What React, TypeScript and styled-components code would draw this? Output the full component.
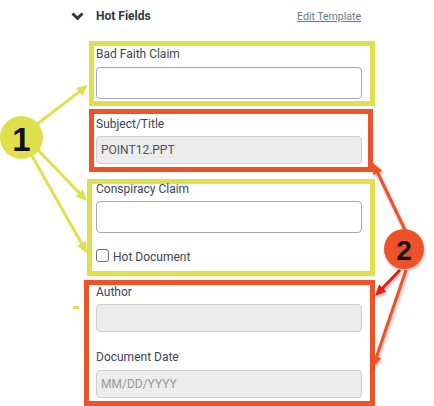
import React from "react";
import styled, { createGlobalStyle } from "styled-components";

const YELLOW = "#dfe04b";
const ORANGE = "#f05228";
const RED = "#f21b12";

const Global = createGlobalStyle`
  html, body { margin: 0; padding: 0; background: #fff; }
  * { box-sizing: border-box; }
`;

const Page = styled.div`
  position: relative;
  width: 434px;
  height: 406px;
  overflow: hidden;
  background: #fff;
  font-family: Roboto, "Liberation Sans", sans-serif;
`;

const Header = styled.div`
  display: flex;
  align-items: baseline;
  margin-left: 71px;
  width: 290px;
  padding-top: 8px;
  height: 24px;
`;

const ChevronIcon = styled.svg`
  width: 13px;
  height: 8px;
  align-self: center;
  flex: none;
`;

const Title = styled.h3`
  margin: 0 0 0 12px;
  font-size: 12px;
  line-height: 16px;
  font-weight: 700;
  color: #2e3847;
`;

const EditLink = styled.a`
  margin-left: auto;
  font-size: 10.5px;
  line-height: 16px;
  color: #6a7890;
  text-decoration: underline;
  cursor: pointer;
`;

const Box = styled.section<{
  $color: string;
  $ml: number;
  $w: number;
  $mt: number;
  $pad: string;
}>`
  display: flex;
  flex-direction: column;
  border: 5px solid ${(p) => p.$color};
  margin-left: ${(p) => p.$ml}px;
  margin-top: ${(p) => p.$mt}px;
  width: ${(p) => p.$w}px;
  padding: ${(p) => p.$pad};
`;

const Field = styled.div<{ $mt?: number; $gap: number }>`
  display: flex;
  flex-direction: column;
  gap: ${(p) => p.$gap}px;
  margin-top: ${(p) => p.$mt ?? 0}px;
`;

const Label = styled.label`
  font-size: 12px;
  line-height: 16px;
  color: #3b4658;
`;

const TextInput = styled.input<{ $h: number; $disabled?: boolean }>`
  display: block;
  width: 100%;
  height: ${(p) => p.$h}px;
  margin: 0;
  padding: 0 4px;
  border: 1px solid ${(p) => (p.$disabled ? "#cfcfcf" : "#a9a9a9")};
  border-radius: 4px;
  background: ${(p) => (p.$disabled ? "#ececec" : "#fff")};
  font-family: Roboto, "Liberation Sans", sans-serif;
  font-size: 12px;
  color: #50555d;
  outline: none;
  &::placeholder {
    color: #9a9a9a;
  }
`;

const CheckRow = styled.label`
  display: flex;
  align-items: flex-start;
  gap: 4px;
  margin-top: 16px;
  height: 16px;
  font-size: 12px;
  line-height: 16px;
  color: #3b4658;
`;

const Check = styled.input`
  appearance: none;
  -webkit-appearance: none;
  width: 13px;
  height: 13px;
  margin: 0;
  border: 1.5px solid #6f6f6f;
  border-radius: 3px;
  background: #fff;
  flex: none;
`;

const Overlay = styled.svg`
  position: absolute;
  left: 0;
  top: 0;
  width: 434px;
  height: 406px;
  pointer-events: none;
  overflow: visible;
`;

const Badge = styled.div<{ $bg: string; $x: number; $y: number; $d: number; $fs: number; $shadow?: boolean }>`
  position: absolute;
  left: ${(p) => p.$x}px;
  top: ${(p) => p.$y}px;
  width: ${(p) => p.$d}px;
  height: ${(p) => p.$d}px;
  border-radius: 50%;
  background: ${(p) => p.$bg};
  display: flex;
  align-items: center;
  justify-content: center;
  font-family: "Liberation Sans", Arial, sans-serif;
  font-weight: 700;
  font-size: ${(p) => p.$fs}px;
  line-height: 1;
  color: #111;
  padding-top: 3px;
  ${(p) => (p.$shadow ? "box-shadow: 1px 2px 3px rgba(0,0,0,0.25);" : "")}
`;

type ArrowProps = { x1: number; y1: number; x2: number; y2: number; color: string; len?: number; w?: number; sw?: number };

function Arrow({ x1, y1, x2, y2, color, len = 11, w = 10, sw = 3 }: ArrowProps) {
  const dx = x2 - x1;
  const dy = y2 - y1;
  const L = Math.hypot(dx, dy);
  const ux = dx / L;
  const uy = dy / L;
  const bx = x2 - ux * len;
  const by = y2 - uy * len;
  const px = -uy * (w / 2);
  const py = ux * (w / 2);
  return (
    <g>
      <line x1={x1} y1={y1} x2={bx + ux} y2={by + uy} stroke={color} strokeWidth={sw} />
      <polygon points={`${x2},${y2} ${bx + px},${by + py} ${bx - px},${by - py}`} fill={color} />
    </g>
  );
}

export default function App() {
  return (
    <Page>
      <Global />
      <Header>
        <ChevronIcon viewBox="0 0 13 8">
          <polyline points="1.5,1.5 6.5,6.3 11.5,1.5" fill="none" stroke="#2e3847" strokeWidth={3} />
        </ChevronIcon>
        <Title>Hot Fields</Title>
        <EditLink>Edit Template</EditLink>
      </Header>

      <Box $color={YELLOW} $ml={89} $w={286} $mt={17} $pad="0 8px 2px 2px">
        <Field $gap={5}>
          <Label>Bad Faith Claim</Label>
          <TextInput $h={32} />
        </Field>
      </Box>

      <Box $color={ORANGE} $ml={89} $w={284} $mt={3} $pad="2px 6px 3px 2px">
        <Field $gap={4}>
          <Label>Subject/Title</Label>
          <TextInput $h={28} $disabled readOnly defaultValue="POINT12.PPT" />
        </Field>
      </Box>

      <Box $color={YELLOW} $ml={87} $w={288} $mt={7} $pad="0 8px 6px 4px">
        <Field $gap={4} $mt={-3}>
          <Label>Conspiracy Claim</Label>
          <TextInput $h={32} />
        </Field>
        <CheckRow>
          <Check type="checkbox" />
          Hot Document
        </CheckRow>
      </Box>

      <Box $color={ORANGE} $ml={84} $w={291} $mt={4} $pad="0 8px 3px 7px">
        <Field $gap={4} $mt={-1}>
          <Label>Author</Label>
          <TextInput $h={28} $disabled readOnly />
        </Field>
        <Field $gap={5} $mt={17}>
          <Label>Document Date</Label>
          <TextInput $h={28} $disabled readOnly placeholder="MM/DD/YYYY" />
        </Field>
      </Box>

      <Overlay viewBox="0 0 434 406">
        <rect x={73} y={306} width={6} height={3} fill={YELLOW} />
        <Arrow x1={36} y1={125} x2={88} y2={85} color={YELLOW} />
        <Arrow x1={38} y1={150} x2={87} y2={201} color={YELLOW} />
        <Arrow x1={32} y1={156} x2={87} y2={253} color={YELLOW} />
        <g style={{ filter: "drop-shadow(1px 2px 1.5px rgba(0,0,0,0.3))" }}>
          <Arrow x1={406} y1={232} x2={373} y2={163} color={ORANGE} />
          <Arrow x1={400} y1={270} x2={375} y2={296} color={RED} />
          <Arrow x1={406} y1={270} x2={373} y2={367} color={ORANGE} />
        </g>
      </Overlay>

      <Badge $bg={YELLOW} $x={0} $y={116} $d={43} $fs={33}>1</Badge>
      <Badge $bg={ORANGE} $x={384} $y={229} $d={40} $fs={28} $shadow>2</Badge>
    </Page>
  );
}
